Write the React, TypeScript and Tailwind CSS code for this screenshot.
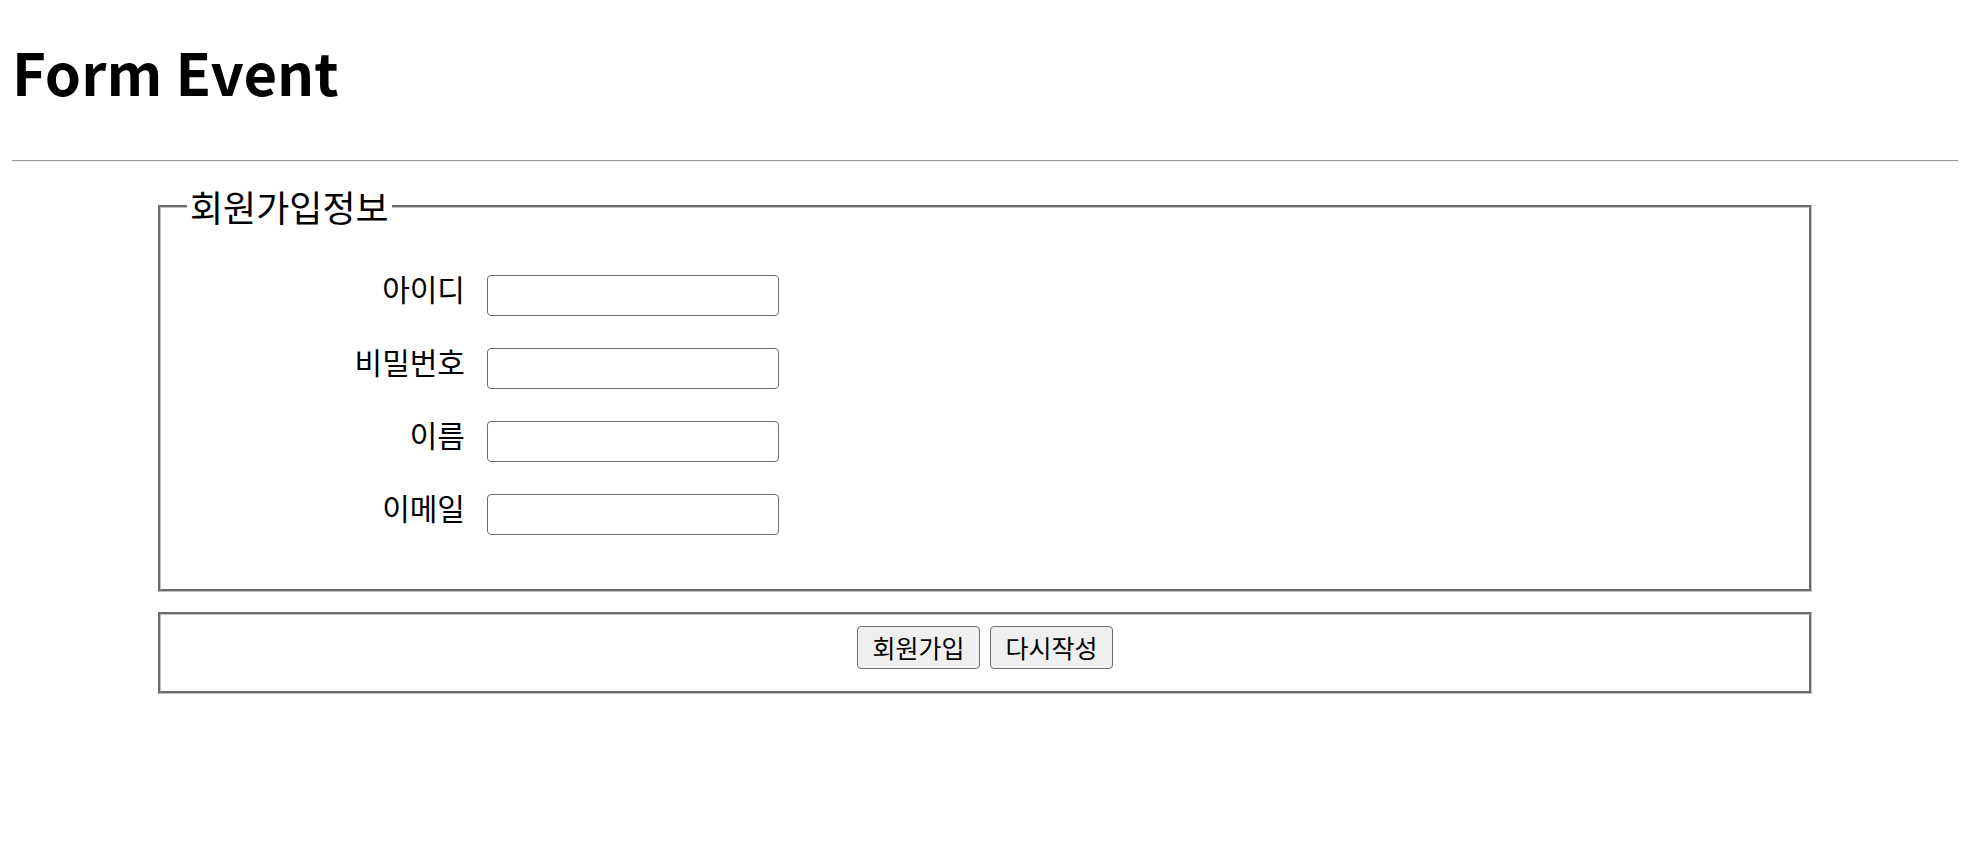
import React from "react";

const fields = ["아이디", "비밀번호", "이름", "이메일"];

const kr = "font-['Noto_Sans_CJK_KR','Noto_Sans',sans-serif]";

export default function App() {
  return (
    <div className={`min-h-screen bg-white px-[12px] pt-[31px] text-black ${kr}`}>
      <h1 className="text-[58px] font-bold leading-[80px]">Form Event</h1>
      <hr className="mt-[49px] border-t border-b border-t-[#9a9a9a] border-b-[#eeeeee]" />

      <form className="mt-[22px]">
        <fieldset className="mx-auto w-[85%] border-[3px] border-[#c0c0c0] [border-style:groove] pb-[54px] pt-[47px]">
          <legend className="ml-[26px] px-[3px] text-[36px] leading-[44px]">회원가입정보</legend>
          <div className="grid grid-cols-[304px_292px] items-center gap-x-[22px] gap-y-[32px]">
            {fields.map((f) => (
              <React.Fragment key={f}>
                <label className="text-right text-[30px] leading-[27px] pb-[14px]">{f}</label>
                <input
                  type="text"
                  className="h-[41px] w-[292px] rounded-[4px] border border-[#6f6f6f] bg-white px-2 text-[24px] outline-none"
                />
              </React.Fragment>
            ))}
          </div>
        </fieldset>

        <fieldset className="mx-auto mt-[20px] flex w-[85%] justify-center border-[3px] border-[#c0c0c0] [border-style:groove] pt-[11px] pb-[22px]">
          <div className="flex justify-center gap-[10px]">
            <button
              type="submit"
              className="h-[43px] w-[123px] rounded-[4px] border border-[#6f6f6f] bg-[#efefef] text-[25px] leading-none"
            >
              회원가입
            </button>
            <button
              type="reset"
              className="h-[43px] w-[123px] rounded-[4px] border border-[#6f6f6f] bg-[#efefef] text-[25px] leading-none"
            >
              다시작성
            </button>
          </div>
        </fieldset>
      </form>
    </div>
  );
}
